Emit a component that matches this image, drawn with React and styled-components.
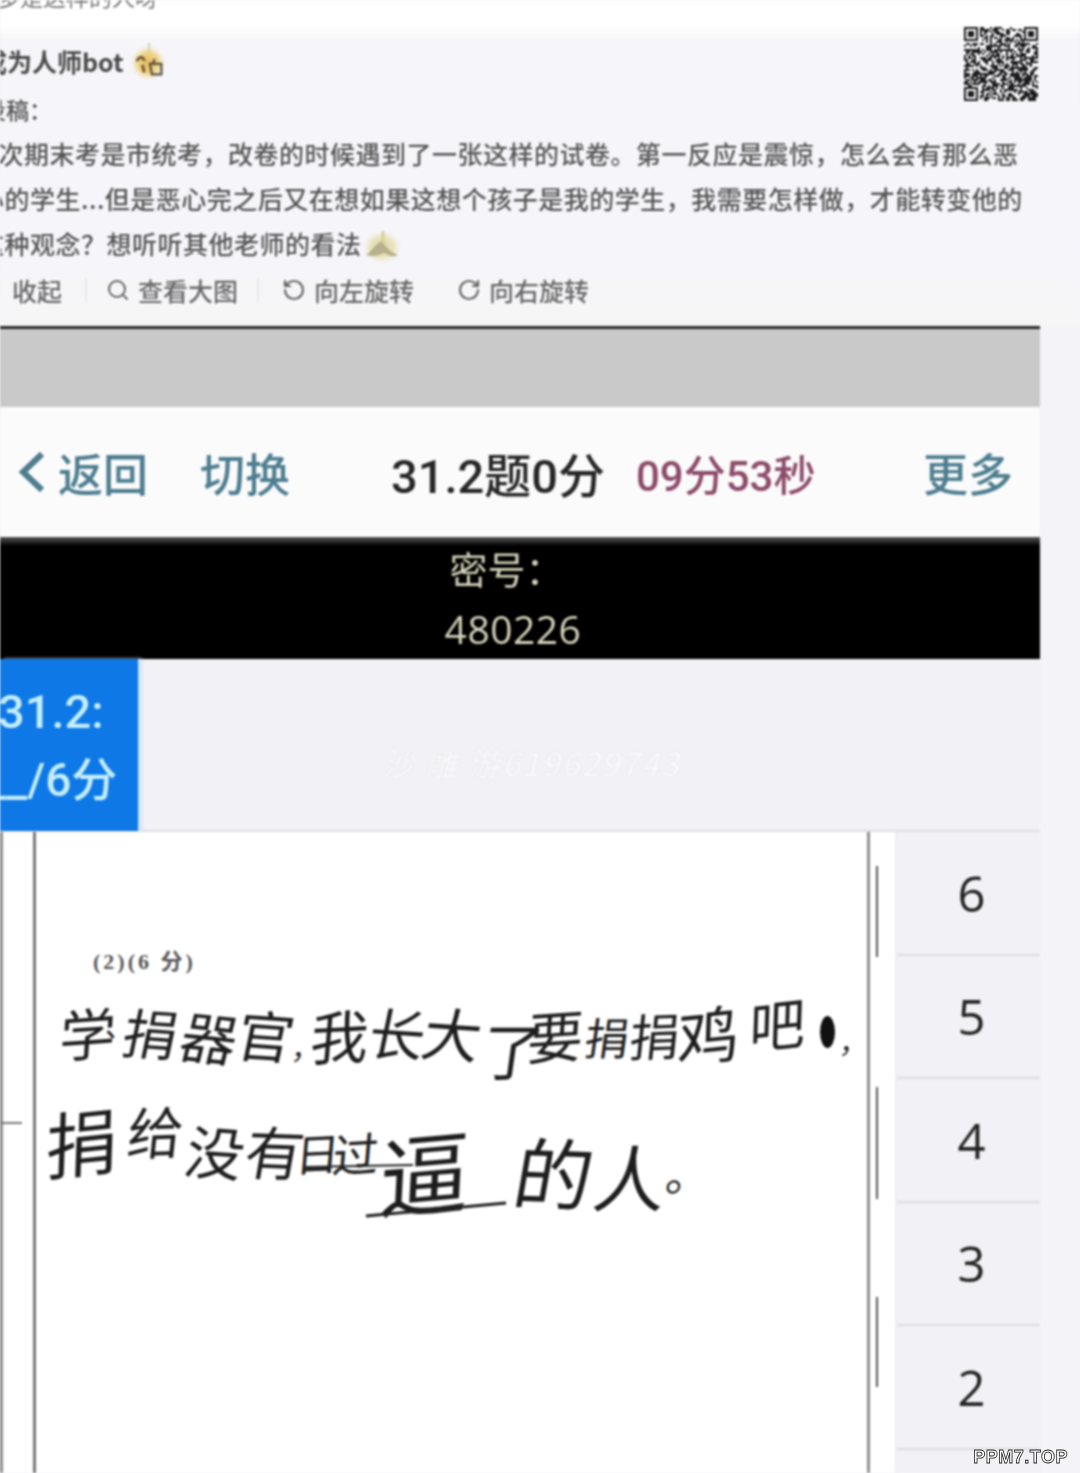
import styled, { createGlobalStyle } from "styled-components";
import { Search, RotateCcw, RotateCw, ChevronDown } from "lucide-react";

const CJK = `"Noto Sans CJK SC", "Liberation Sans", sans-serif`;

const GlobalStyle = createGlobalStyle`
  html, body {
    margin: 0;
    padding: 0;
    background: #f4f4f8;
  }
`;

const Page = styled.div`
  position: relative;
  width: 1080px;
  height: 1473px;
  overflow: hidden;
  font-family: ${CJK};
  background: #f4f4f8;
`;

const Soft = styled.div`
  display: flex;
  flex-direction: column;
  height: 100%;
  filter: blur(0.8px);
`;

// POST HEADER
const Post = styled.div`
  position: relative;
  height: 326px;
  flex: none;
  background: linear-gradient(180deg, #ffffff 0, #ffffff 26px, #f6f5f9 40px, #f6f5fa 75%, #f7f6f7 100%);
  color: #555;
  font-weight: 500;
  overflow: hidden;
`;

const CutLine = styled.div`
  height: 8px;
  margin: -8px 0 8px -3px;
  font-size: 23px;
  line-height: 8px;
  font-weight: 400;
  color: #777;
  white-space: nowrap;
`;

const Author = styled.div`
  display: flex;
  align-items: center;
  margin: 41px 0 0 -18px;
  height: 40px;
  font-size: 25px;
  font-weight: 700;
  color: #4a4a4a;
  white-space: nowrap;
`;

const Label = styled.div`
  margin: 10px 0 3px -17px;
  height: 36px;
  font-size: 23px;
  line-height: 36px;
  white-space: nowrap;
`;

const BodyLine = styled.div`
  display: flex;
  align-items: center;
  height: 45px;
  margin-left: ${(p) => p.$left}px;
  font-size: 25px;
  letter-spacing: 0.5px;
  white-space: nowrap;
`;

const QrBox = styled.svg`
  position: absolute;
  left: 964px;
  top: 27px;
  width: 74px;
  height: 74px;
`;

const Tools = styled.div`
  display: flex;
  align-items: center;
  height: 44px;
  margin: 3px 0 0 -14px;
  font-size: 25px;
  color: #666;
`;

const Tool = styled.div`
  display: flex;
  align-items: center;
  gap: 8px;
  width: ${(p) => p.$w}px;
  flex: none;
  white-space: nowrap;
`;

const ToolRule = styled.span`
  width: 2px;
  height: 24px;
  margin-right: ${(p) => p.$gap}px;
  background: #e6e6ea;
  flex: none;
`;

// MARKING PANEL
const Panel = styled.div`
  width: 1040px;
  flex: 1;
  display: flex;
  flex-direction: column;
  min-height: 0;
  border-top: 3px solid #2b2b2b;
`;

const GrayBar = styled.div`
  height: 78px;
  flex: none;
  background: #c9c9c9;
`;

const NavBar = styled.div`
  display: flex;
  align-items: center;
  height: 130px;
  flex: none;
  padding: 0 27px 0 17px;
  background: #fbfbfc;
`;

const BackMark = styled.svg`
  width: 30px;
  height: 44px;
  flex: none;
`;

const NavLink = styled.span`
  margin-left: ${(p) => p.$left}px;
  font-size: 45px;
  font-weight: 500;
  color: #4d7d8f;
  white-space: nowrap;
`;

const Title = styled.span`
  margin-left: 101px;
  font-family: Roboto, ${CJK};
  font-size: 47px;
  font-weight: 500;
  color: #262626;
  white-space: nowrap;
`;

const Timer = styled.span`
  margin-left: 31px;
  font-family: Roboto, ${CJK};
  font-size: 42px;
  font-weight: 500;
  color: #8c4a68;
  white-space: nowrap;
`;

const More = styled(NavLink)`
  margin-left: auto;
`;

const BlackBar = styled.div`
  height: 122px;
  flex: none;
  display: flex;
  flex-direction: column;
  align-items: center;
  padding-right: 54px;
  box-sizing: border-box;
  background: linear-gradient(180deg, #555 0, #000 9px);
  color: #d6d3bb;
`;

const Secret = styled.div`
  height: 62px;
  font-size: 38px;
  line-height: 62px;
  margin-left: 27px;
`;

const SecretNo = styled.div`
  font-family: "Open Sans", sans-serif;
  font-size: 39px;
  line-height: 60px;
  letter-spacing: 0.5px;
  margin-left: 40px;
`;

const TabRow = styled.div`
  position: relative;
  display: flex;
  height: 173px;
  flex: none;
  background: #f1f1f6;
  border-bottom: 2px solid #dfdfe2;
  box-sizing: border-box;
`;

const Tab = styled.div`
  width: 138px;
  flex: none;
  margin-bottom: -1px;
  background: #0d78e6;
  box-shadow: 4px 0 3px #cde4f9;
  color: #c5eefc;
  font-family: Roboto, ${CJK};
  font-weight: 500;
  line-height: 68px;
  padding-top: 19px;
  box-sizing: border-box;
  white-space: nowrap;
`;

const TabLine = styled.div`
  margin-left: ${(p) => p.$left}px;
  font-size: ${(p) => p.$size}px;
`;

const Watermark = styled.div`
  position: absolute;
  left: 382px;
  top: 80px;
  font-style: italic;
  font-size: 32px;
  letter-spacing: 2px;
  color: #fbfbfd;
  text-shadow: 0 0 1px #cfcfd6;
  white-space: nowrap;
`;

const Sheet = styled.div`
  flex: 1;
  display: flex;
  min-height: 0;
`;

const Margin = styled.div`
  position: relative;
  width: 36px;
  flex: none;
  box-sizing: border-box;
  background: #fff;
  border-left: 3px solid #8d8d8d;
  border-right: 3px solid #777;
`;

const MarginTick = styled.span`
  position: absolute;
  left: -3px;
  top: 290px;
  width: 22px;
  height: 2px;
  background: #777;
`;

const Paper = styled.div`
  position: relative;
  width: 834px;
  flex: none;
  box-sizing: border-box;
  padding-top: 118px;
  background: #fff;
  border-right: 3px solid #8f8f8f;
`;

const Part = styled.div`
  margin-left: 57px;
  font-family: "Liberation Serif", ${CJK};
  font-size: 22px;
  font-weight: 700;
  line-height: 24px;
  color: #555;
  letter-spacing: 3px;
`;

const HandLine = styled.div`
  display: flex;
  align-items: center;
  height: ${(p) => p.$h}px;
  margin-left: ${(p) => p.$left}px;
`;

const Glyph = styled.span`
  display: inline-block;
  width: ${(p) => p.$w}px;
  flex: none;
  text-align: center;
  font-size: ${(p) => p.$size}px;
  font-weight: 400;
  line-height: 1;
  color: #1d1d1d;
  transform: translateY(${(p) => p.$dy}px) rotate(${(p) => p.$rot}deg) skewX(-8deg);
`;

const Blot = styled.span`
  width: 15px;
  height: 32px;
  margin: 0 5px 0 10px;
  flex: none;
  border-radius: 50%;
  background: #111;
  transform: translateY(8px);
`;

const Strokes = styled.svg`
  position: absolute;
  left: 0;
  top: 0;
  width: 834px;
  height: 640px;
`;

const Track = styled.div`
  width: 27px;
  flex: none;
  padding-left: 6px;
  box-sizing: border-box;
  display: flex;
  flex-direction: column;
  background: #fff;
  border-right: 2px solid #eeeef0;
`;

const Dash = styled.span`
  width: 2px;
  height: ${(p) => p.$h}px;
  margin-top: ${(p) => p.$top}px;
  background: #555;
`;

const Scores = styled.div`
  flex: 1;
  display: flex;
  flex-direction: column;
  background: #f2f2f6;
`;

const Score = styled.div`
  height: 123.5px;
  flex: none;
  box-sizing: border-box;
  display: flex;
  align-items: center;
  justify-content: center;
  padding-left: 6px;
  border-bottom: 2px solid #dcdce0;
  font-family: "Open Sans", sans-serif;
  font-size: 49px;
  font-weight: 500;
  color: #222;
`;

const SiteMark = styled.div`
  position: absolute;
  right: 12px;
  bottom: 5px;
  font-family: "Liberation Sans", sans-serif;
  font-size: 18px;
  font-weight: 700;
  color: #fff;
  -webkit-text-stroke: 0.8px #222;
  letter-spacing: 0.5px;
`;

// module grid for the little qr code, seeded so it stays the same
const qrCells = () => {
  const size = 37;
  const cells = [];
  let seed = 73;
  const finder = (x, y) => {
    const dx = x < 8 ? x : x >= size - 8 ? x - (size - 7) : -1;
    const dy = y < 8 ? y : y >= size - 8 ? y - (size - 7) : -1;
    if (x >= size - 8 && y >= size - 8) return null;
    if (dx < 0 || dy < 0 || dx > 7 || dy > 7) return null;
    if (dx === 7 || dy === 7) return false;
    return dx === 0 || dx === 6 || dy === 0 || dy === 6 || (dx > 1 && dx < 5 && dy > 1 && dy < 5);
  };
  for (let y = 0; y < size; y++) {
    for (let x = 0; x < size; x++) {
      seed = (seed * 1103515245 + 12345) & 0x7fffffff;
      const f = finder(x, y);
      const on = f === null ? (seed >> 16) % 100 < 52 : f;
      if (on) cells.push([x, y]);
    }
  }
  return cells;
};

const Qr = () => (
  <QrBox viewBox="0 0 37 37" shapeRendering="crispEdges">
    {qrCells().map(([x, y]) => (
      <rect key={`${x}-${y}`} x={x} y={y} width="1" height="1" fill="#1c1c1c" />
    ))}
  </QrBox>
);

const Emoji = () => (
  <svg width="38" height="44" viewBox="0 0 40 44" style={{ marginLeft: 6, flex: "none" }}>
    <defs>
      <radialGradient id="authorGlow">
        <stop offset="0" stopColor="#e7bb5c" />
        <stop offset="0.55" stopColor="#f0d488" />
        <stop offset="1" stopColor="#f6f5f9" stopOpacity="0" />
      </radialGradient>
    </defs>
    <ellipse cx="19" cy="24" rx="20" ry="20" fill="url(#authorGlow)" />
    <path d="M20 3v10" stroke="#cfd2a8" strokeWidth="2" />
    <path d="M7 22c3-5 7-5 8 0M13 26l2 8" stroke="#6e5a33" strokeWidth="3" fill="none" />
    <path d="M21 25h12v11H23zM26 20l-2 5" stroke="#5a5245" strokeWidth="2.4" fill="none" />
  </svg>
);

const Tip = () => (
  <svg width="42" height="42" viewBox="0 0 42 42" style={{ flex: "none", marginTop: 2 }}>
    <defs>
      <radialGradient id="tipGlow">
        <stop offset="0" stopColor="#d9cfa0" />
        <stop offset="0.6" stopColor="#ece6c4" />
        <stop offset="1" stopColor="#f6f5f9" stopOpacity="0" />
      </radialGradient>
    </defs>
    <ellipse cx="20" cy="24" rx="21" ry="18" fill="url(#tipGlow)" />
    <path d="M4 32c6-4 8-10 16-14 2 5 6 9 16 14-6 3-10 0-14-2-6 3-12 4-18 2z" fill="#b7b08a" />
    <path d="M21 8v12" stroke="#d6cf9a" strokeWidth="3" />
  </svg>
);

// handwriting: char, box width, size, tilt, drop
const firstLine = [
  ["学", 46, 56, -4, 8], ["、", 14, 30, 0, 0], ["捐", 62, 54, 4, 8], ["器", 56, 56, 6, 12], ["官", 54, 56, 4, 10],
];
const firstLineRest = [
  ["我", 60, 58, -3, 10], ["长", 54, 56, 4, 8], ["大", 58, 58, 4, 8], ["了", 44, 62, 0, 24],
  ["要", 59, 56, -4, 10], ["捐", 45, 44, 0, 12], ["捐", 42, 50, -2, 10], ["鸡", 73, 62, -6, 8], ["吧", 65, 56, -6, -2],
];
const secondLine = [
  ["捐", 88, 72, -6, -10], ["给", 60, 56, -2, -20], ["没", 60, 58, 4, 0], ["有", 50, 58, 2, 0],
  ["日", 36, 44, -3, 2], ["过", 48, 46, -3, 2], ["逼", 90, 90, -5, 20],
];
const lastWords = [
  ["的", 80, 78, 2, 20], ["人", 72, 72, 0, 25], ["。", 30, 44, 0, 22],
];

const renderGlyphs = (list) =>
  list.map(([ch, w, size, rot, dy], i) => (
    <Glyph key={i} $w={w} $size={size} $rot={rot} $dy={dy}>{ch}</Glyph>
  ));

const dashes = [
  [34, 91],
  [130, 112],
  [98, 90],
];

const App = () => {
  return (
    <Page>
      <GlobalStyle />
      <Soft>
        <Post>
          <CutLine>多是这样的人呀</CutLine>
          <Author>
            成为人师bot
            <Emoji />
          </Author>
          <Label>投稿：</Label>
          <BodyLine $left={-27}>本次期末考是市统考，改卷的时候遇到了一张这样的试卷。第一反应是震惊，怎么会有那么恶</BodyLine>
          <BodyLine $left={-21}>心的学生...但是恶心完之后又在想如果这想个孩子是我的学生，我需要怎样做，才能转变他的</BodyLine>
          <BodyLine $left={-21}>这种观念？想听听其他老师的看法<Tip /></BodyLine>
          <Tools>
            <Tool $w={99}><ChevronDown size={18} />收起</Tool>
            <ToolRule $gap={19} />
            <Tool $w={151}><Search size={24} strokeWidth={2} />查看大图</Tool>
            <ToolRule $gap={23} />
            <Tool $w={175}><RotateCcw size={24} strokeWidth={2.2} />向左旋转</Tool>
            <Tool $w={180}><RotateCw size={24} strokeWidth={2.2} />向右旋转</Tool>
          </Tools>
          <Qr />
        </Post>

        <Panel>
          <GrayBar />
          <NavBar>
            <BackMark viewBox="0 0 30 44">
              <path d="M25 4 6 22l19 18" stroke="#4d7d8f" strokeWidth="6" fill="none" />
            </BackMark>
            <NavLink $left={11}>返回</NavLink>
            <NavLink $left={52}>切换</NavLink>
            <Title>31.2题0分</Title>
            <Timer>09分53秒</Timer>
            <More>更多</More>
          </NavBar>
          <BlackBar>
            <Secret>密号：</Secret>
            <SecretNo>480226</SecretNo>
          </BlackBar>
          <TabRow>
            <Tab>
              <TabLine $left={-2} $size={47}>31.2:</TabLine>
              <TabLine $left={-14} $size={46}>__/6分</TabLine>
            </Tab>
            <Watermark>沙 雕 游619629743</Watermark>
          </TabRow>
          <Sheet>
            <Margin>
              <MarginTick />
            </Margin>
            <Paper>
              <Part>(2)(6 分)</Part>
              <HandLine $h={100} $left={24}>
                {renderGlyphs(firstLine)}
                <Glyph $w={18} $size={30} $rot={0} $dy={22}>，</Glyph>
                {renderGlyphs(firstLineRest)}
                <Blot />
                <Glyph $w={18} $size={30} $rot={0} $dy={16}>，</Glyph>
              </HandLine>
              <HandLine $h={152} $left={2}>
                {renderGlyphs(secondLine)}
                <Glyph $w={45} $size={10} $rot={0} $dy={0} />
                {renderGlyphs(lastWords)}
              </HandLine>
              <Strokes viewBox="0 0 834 640">
                <path d="M267 335l110-2" stroke="#222" strokeWidth="2" fill="none" />
                <path d="M330 384l140-13" stroke="#222" strokeWidth="3" fill="none" />
              </Strokes>
            </Paper>
            <Track>
              {dashes.map(([top, h]) => (
                <Dash key={top} $top={top} $h={h} />
              ))}
            </Track>
            <Scores>
              {[6, 5, 4, 3, 2].map((n) => (
                <Score key={n}>{n}</Score>
              ))}
            </Scores>
          </Sheet>
        </Panel>
      </Soft>
      <SiteMark>PPM7.TOP</SiteMark>
    </Page>
  );
};

export default App;
